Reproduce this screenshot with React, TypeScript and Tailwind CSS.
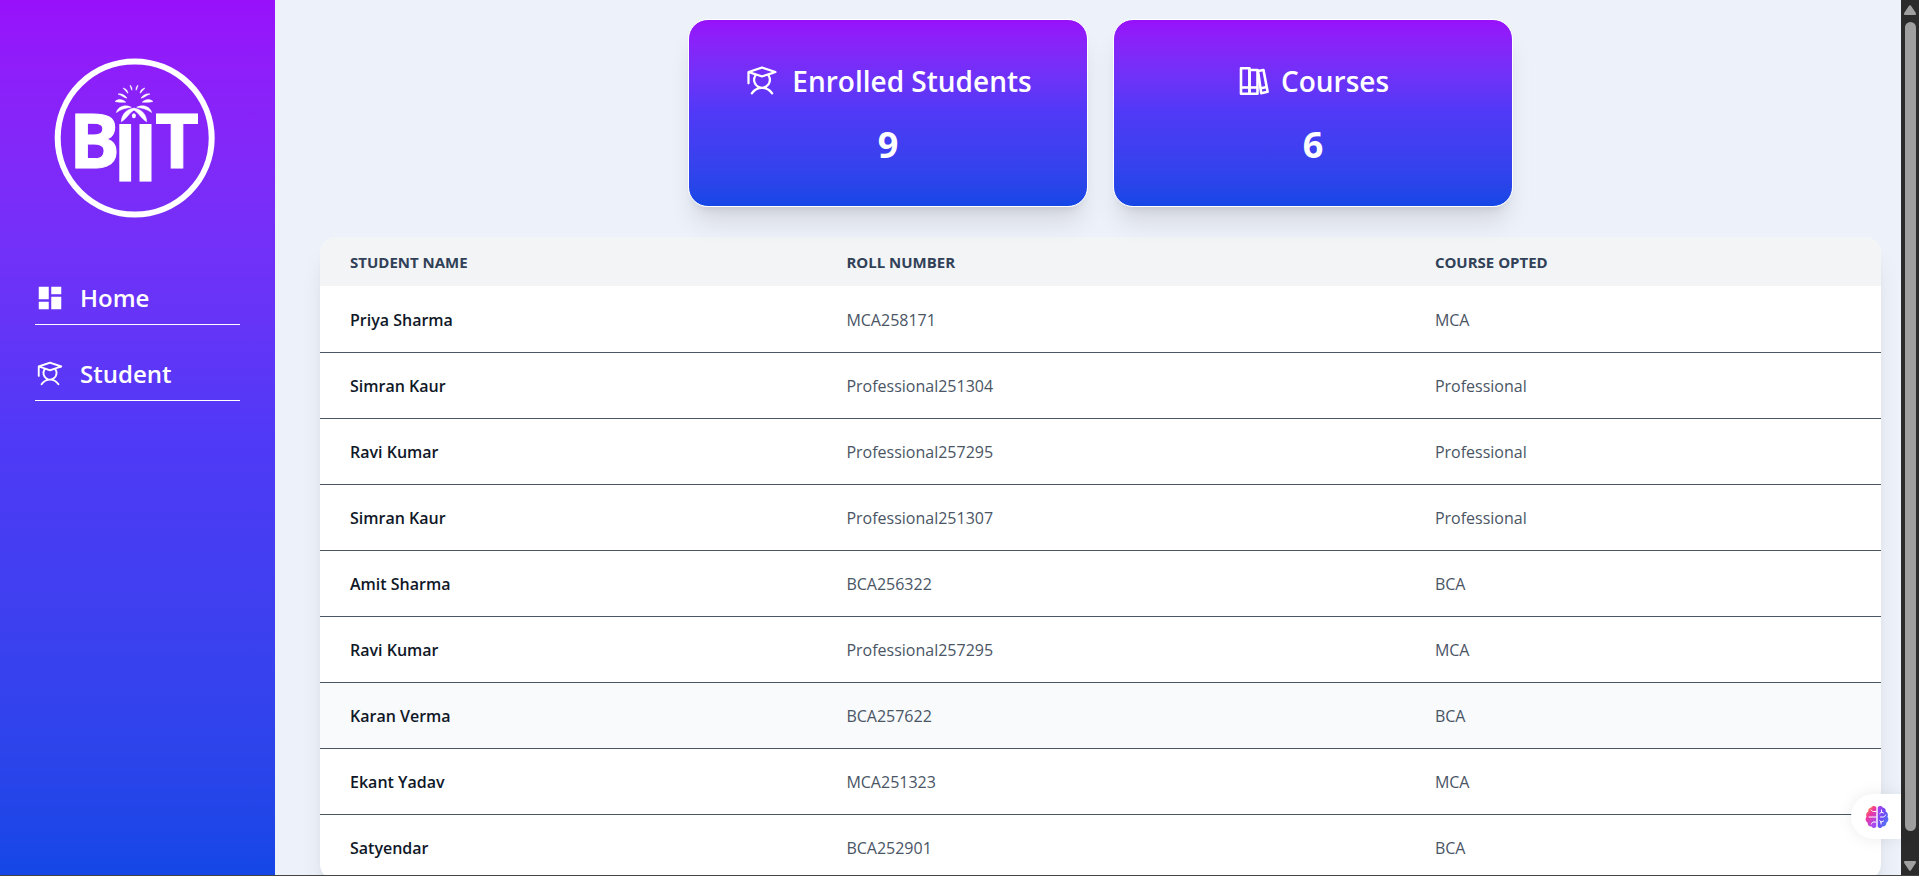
import type { ReactNode } from "react";
import { MdDashboard } from "react-icons/md";
import { PiStudent } from "react-icons/pi";

const students = [
  { name: "Priya Sharma", roll: "MCA258171", course: "MCA" },
  { name: "Simran Kaur", roll: "Professional251304", course: "Professional" },
  { name: "Ravi Kumar", roll: "Professional257295", course: "Professional" },
  { name: "Simran Kaur", roll: "Professional251307", course: "Professional" },
  { name: "Amit Sharma", roll: "BCA256322", course: "BCA" },
  { name: "Ravi Kumar", roll: "Professional257295", course: "MCA" },
  { name: "Karan Verma", roll: "BCA257622", course: "BCA", active: true },
  { name: "Ekant Yadav", roll: "MCA251323", course: "MCA" },
  { name: "Satyendar", roll: "BCA252901", course: "BCA" },
];

function PalmHalf() {
  return (
    <g>
      <path d="M134.500 108.200 C127 108.500 121.500 114 121.300 121.800 C127 118.500 129.500 112.500 134.500 109.800 Z" />
      <path d="M116.300 112.600 C118.500 105.500 126 104.500 131.300 107.300 C125.500 108 120.500 109.500 116.300 112.600 Z" />
      <path d="M115 101.500 C118 98.800 122.500 99 125.800 102.200 C122 102.500 118.500 102.300 115 101.500 Z" />
      <path d="M118 94 C121.500 93.300 125 95 127 98.200 C123.500 97.500 121.500 95.300 118 94 Z" />
      <path d="M123 88 C126 88.500 127.600 90.500 128 93.300 C126 92 125 89.800 123 88 Z" />
      <path d="M130 85 C131.700 86.500 132.300 88.500 131.900 90.300 C130.700 88.700 130.600 87 130 85 Z" />
    </g>
  );
}

function Logo() {
  return (
    <svg viewBox="54 57 162 162" className="size-[162px]" fill="white" role="img" aria-label="BIIT">
      <ellipse cx="134.700" cy="138" rx="77" ry="76.500" fill="none" stroke="white" strokeWidth="6" />
      <g stroke="white" strokeWidth="0.500">
        <PalmHalf />
        <g transform="translate(268 0) scale(-1 1)">
          <PalmHalf />
        </g>
      </g>
      <ellipse cx="133.900" cy="115.800" rx="2" ry="2.500" />
      <rect x="119.300" y="124" width="11.800" height="57.600" />
      <rect x="139.500" y="124" width="12" height="57.600" />
      <g className="font-['Open_Sans'] font-bold" stroke="white" strokeWidth="1">
        <text x="69" y="167.500" fontSize="76">B</text>
        <text x="155" y="167.500" fontSize="76">T</text>
      </g>
    </svg>
  );
}

function BinderIcon() {
  return (
    <svg viewBox="0 0 32 32" className="size-8" fill="none" stroke="white" strokeWidth="2.600" strokeLinejoin="round">
      <path d="M4 3.300 H12.500 V28.700 H4 Z" />
      <path d="M12.500 5 H20.500 V28.700 H12.500 Z" />
      <path d="M4 22.500 H20.500" />
      <path d="M21 6 L26.500 5 L30.600 26.800 L24.200 28.200 Z" />
      <path d="M23 23.500 L29.500 22" />
    </svg>
  );
}

function NavItem({ icon, label }: { icon: ReactNode; label: string }) {
  return (
    <li>
      <a href="#" className="flex h-[57px] items-center gap-[15px] border-b border-white pt-1 text-2xl font-semibold text-white">
        {icon}
        <span>{label}</span>
      </a>
    </li>
  );
}

function StatCard({ icon, label, value }: { icon: ReactNode; label: string; value: number }) {
  return (
    <section className="flex h-[188px] w-full max-w-[400px] flex-col items-center justify-center gap-[18px] rounded-[20px] border border-white bg-linear-to-b from-purple-600 via-indigo-600 to-blue-700 pt-[6px] text-white shadow-xl">
      <h2 className="flex items-center gap-3 text-[28px] leading-10 font-semibold">
        {icon}
        {label}
      </h2>
      <p className="text-4xl leading-[52px] font-bold">{value}</p>
    </section>
  );
}

function BrainIcon() {
  return (
    <svg viewBox="0 0 24 24" className="size-6">
      <defs>
        <linearGradient id="brain-left" x1="0" y1="0" x2="0.600" y2="1">
          <stop offset="0" stopColor="#ff9a3c" />
          <stop offset="0.150" stopColor="#ff8a3c" />
          <stop offset="0.450" stopColor="#f0359c" />
          <stop offset="1" stopColor="#a34bf5" />
        </linearGradient>
        <linearGradient id="brain-right" x1="0" y1="0" x2="1" y2="1">
          <stop offset="0" stopColor="#b03cf0" />
          <stop offset="0.500" stopColor="#6a4df5" />
          <stop offset="1" stopColor="#4a8cf8" />
        </linearGradient>
      </defs>
      <path
        fill="url(#brain-left)"
        d="M11.300 2.500 C10.500 0.600 7.500 0.400 6.300 2.400 C4 2.500 2.800 4.600 3.300 6.500 C1.300 7.500 0.500 10 1.500 11.700 C0 13.500 0.400 16.500 2.500 17.400 C2.500 20 4.500 21.700 6.600 21.400 C8 23.500 10.800 23.300 11.300 21.500 Z"
      />
      <path
        fill="url(#brain-right)"
        d="M12.700 2.500 C13.500 0.600 16.500 0.400 17.700 2.400 C20 2.500 21.200 4.600 20.700 6.500 C22.700 7.500 23.500 10 22.500 11.700 C24 13.500 23.600 16.500 21.500 17.400 C21.500 20 19.500 21.700 17.400 21.400 C16 23.500 13.200 23.300 12.700 21.500 Z"
      />
      <g fill="none" stroke="white" strokeWidth="1" strokeLinecap="round">
        <path d="M11 6.500 H8.500 C7.500 6.500 6.500 6 6 5 M11 12 H4 M11 17 H9 C7.500 17 6.500 18 6.300 19" />
        <path d="M16.500 5 V7 M16.500 7 L14.800 8.500 M16.500 7 L18.500 8 M15.500 12 H18 C19.500 12 20 11 20.500 10 M16 17 L14.800 15.500 M16 17 L18.500 16 M16 17 V19" />
      </g>
    </svg>
  );
}

function ScrollTrack() {
  return (
    <div aria-hidden="true" className="flex w-[18px] shrink-0 flex-col items-center bg-[#2b2b2b] pt-[5px] pb-1">
      <svg viewBox="0 0 12 10" className="h-[10px] w-3" fill="#9f9f9f">
        <path d="M5 0.800 Q6 -0.400 7 0.800 L11.800 8 Q12.400 10 11 10 H1 Q-0.400 10 0.200 8 Z" />
      </svg>
      <div className="mt-[7px] mb-[30px] w-[11px] flex-1 rounded-full bg-[#9f9f9f]" />
      <svg viewBox="0 0 12 10" className="h-[10px] w-3" fill="#9f9f9f">
        <path d="M5 9.200 Q6 10.400 7 9.200 L11.800 2 Q12.400 0 11 0 H1 Q-0.400 0 0.200 2 Z" />
      </svg>
    </div>
  );
}

export default function App() {
  return (
    <div className="flex h-screen overflow-hidden border-b border-[#444444] bg-[#edf1fa] font-['Open_Sans',sans-serif]">
      <aside className="flex w-[275px] shrink-0 flex-col bg-linear-to-b from-purple-600 via-indigo-600 to-blue-700 px-[35px] pt-[57px]">
        <div className="flex justify-center pr-[6px]">
          <Logo />
        </div>
        <nav className="mt-[49px]">
          <ul className="flex flex-col gap-[19px]">
            <NavItem icon={<MdDashboard className="size-[30px]" />} label="Home" />
            <NavItem icon={<PiStudent className="size-[30px]" />} label="Student" />
          </ul>
        </nav>
      </aside>

      <main className="min-w-0 flex-1 pt-[19px] pr-5 pl-[45px]">
        <div className="flex justify-center gap-[25px]">
          <StatCard icon={<PiStudent className="size-9" />} label="Enrolled Students" value={9} />
          <StatCard icon={<BinderIcon />} label="Courses" value={6} />
        </div>

        <div className="mt-[30px] overflow-hidden rounded-2xl bg-white shadow-xl">
          <table className="w-full table-fixed text-left">
            <thead className="bg-gray-100 text-[15px] text-slate-700 uppercase">
              <tr className="h-[49px]">
                <th scope="col" className="w-[31.8%] px-[30px] pt-0.5 font-bold">Student Name</th>
                <th scope="col" className="w-[37.7%] px-[30px] pt-0.5 font-bold">Roll Number</th>
                <th scope="col" className="w-[30.5%] px-[30px] pt-0.5 font-bold">Course Opted</th>
              </tr>
            </thead>
            <tbody className="divide-y divide-gray-600 text-base">
              {students.map((s, i) => (
                <tr key={i} className={s.active ? "h-[66px] bg-slate-50" : "h-[66px] hover:bg-slate-50"}>
                  <td className="px-[30px] pt-0.5 font-semibold text-gray-900">{s.name}</td>
                  <td className="px-[30px] pt-0.5 text-gray-600">{s.roll}</td>
                  <td className="px-[30px] pt-0.5 text-gray-600">{s.course}</td>
                </tr>
              ))}
            </tbody>
          </table>
        </div>
      </main>

      <button
        type="button"
        aria-label="Open assistant"
        className="absolute right-[18px] bottom-[37px] flex h-[45px] w-[50px] items-center rounded-l-full bg-white pl-[14px] shadow-[0_0_16px_rgba(0,0,0,0.08)]"
      >
        <BrainIcon />
      </button>
      <ScrollTrack />
    </div>
  );
}
